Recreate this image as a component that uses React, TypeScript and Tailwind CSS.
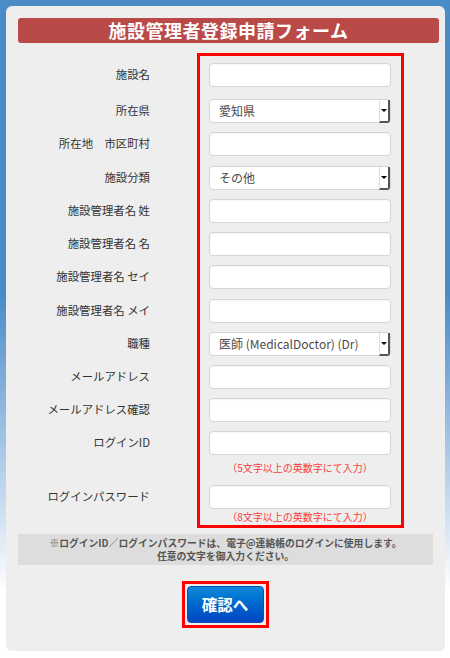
import React from 'react';

type Row = {
  label: string;
  kind: 'input' | 'select';
  value?: string;
  gap: string;
  hint?: string;
  hintBox?: string;
};

const rows: Row[] = [
  { label: '施設名', kind: 'input', gap: 'mt-[7px]' },
  { label: '所在県', kind: 'select', value: '愛知県', gap: 'mt-[12px]' },
  { label: '所在地　市区町村', kind: 'input', gap: 'mt-[9px]' },
  { label: '施設分類', kind: 'select', value: 'その他', gap: 'mt-[10px]' },
  { label: '施設管理者名 姓', kind: 'input', gap: 'mt-[9px]' },
  { label: '施設管理者名 名', kind: 'input', gap: 'mt-[9px]' },
  { label: '施設管理者名 セイ', kind: 'input', gap: 'mt-[9px]' },
  { label: '施設管理者名 メイ', kind: 'input', gap: 'mt-[10px]' },
  { label: '職種', kind: 'select', value: '医師 (MedicalDoctor) (Dr)', gap: 'mt-[9px]' },
  { label: 'メールアドレス', kind: 'input', gap: 'mt-[9px]' },
  { label: 'メールアドレス確認', kind: 'input', gap: 'mt-[9px]' },
  {
    label: 'ログインID',
    kind: 'input',
    gap: 'mt-[9px]',
    hint: '（5文字以上の英数字にて入力）',
    hintBox: 'h-[30px] pt-[7px]',
  },
  {
    label: 'ログインパスワード',
    kind: 'input',
    gap: 'mt-0',
    hint: '（8文字以上の英数字にて入力）',
    hintBox: 'h-[16px] pt-[2px]',
  },
];

function Field({ row }: { row: Row }) {
  if (row.kind === 'select') {
    return (
      <div className="relative flex h-[24px] items-center rounded-[4px] border border-[#d4d4d4] bg-white pl-[9px] text-[12px] text-[#4a4a4a]">
        <span>{row.value}</span>
        <div className="absolute right-0 top-0 flex h-[23px] w-[11px] items-center justify-center rounded-br-[3px] border-b-2 border-l border-r-2 border-b-[#555] border-l-[#ddd] border-r-[#555] bg-white">
          <div className="h-0 w-0 border-x-[3px] border-t-[3px] border-x-transparent border-t-black" />
        </div>
      </div>
    );
  }
  return (
    <div className="h-[24px] rounded-[4px] border border-[#d4d4d4] bg-white shadow-[inset_0_1px_1px_rgba(0,0,0,0.04)]" />
  );
}

export default function App() {
  return (
    <div
      className="h-[658px] w-[450px] bg-linear-to-b from-[#4a8cc8] from-45% to-white to-90% pl-[6px] pt-[6px]"
      style={{ fontFamily: '"Noto Sans CJK JP", "Noto Sans", sans-serif' }}
    >
      <div className="h-[645px] w-[439px] rounded-[6px] bg-[#eeeeee] pl-[12px] pr-[6px] pt-[12px]">
        <div className="flex h-[25px] w-[421px] items-center justify-center rounded-[3px] bg-[#b94a48] text-[18px] font-bold tracking-[0.5px] text-white">
          施設管理者登録申請フォーム
        </div>

        <div className="mt-[10px] flex">
          {/* labels */}
          <div className="w-[132px] border-y-[3px] border-transparent text-right text-[11.4px] text-[#333]">
            {rows.map((row) => (
              <div key={row.label} className={row.gap}>
                <div className="flex h-[24px] items-center justify-end">{row.label}</div>
                {row.hint && <div className={row.hintBox} />}
              </div>
            ))}
          </div>

          {/* inputs */}
          <div className="ml-[47px] w-[207px] border-[3px] border-[#ff0000] pl-[9px] pr-[10px]">
            {rows.map((row) => (
              <div key={row.label} className={row.gap}>
                <Field row={row} />
                {row.hint && (
                  <div className={`${row.hintBox} text-center text-[10px] leading-[12px] text-[#ff3b3b]`}>
                    {row.hint}
                  </div>
                )}
              </div>
            ))}
          </div>
        </div>

        <div className="mt-[6px] flex h-[31px] w-[415px] flex-col items-center justify-center bg-[#dddddd] text-[9.8px] font-bold leading-[13px] text-[#555]">
          <p>※ログインID／ログインパスワードは、電子@連絡帳のログインに使用します。</p>
          <p>任意の文字を御入力ください。</p>
        </div>

        <div className="mt-[16px] flex justify-center pr-[7px]">
          <div className="border-[3px] border-[#ff0000] p-[2px]">
            <button className="flex h-[37px] w-[77px] items-center justify-center rounded-[4px] border border-[#0b4fb8] bg-linear-to-b from-[#1289d8] to-[#0042c2] text-[15.5px] font-bold text-white">
              確認へ
            </button>
          </div>
        </div>
      </div>
    </div>
  );
}
